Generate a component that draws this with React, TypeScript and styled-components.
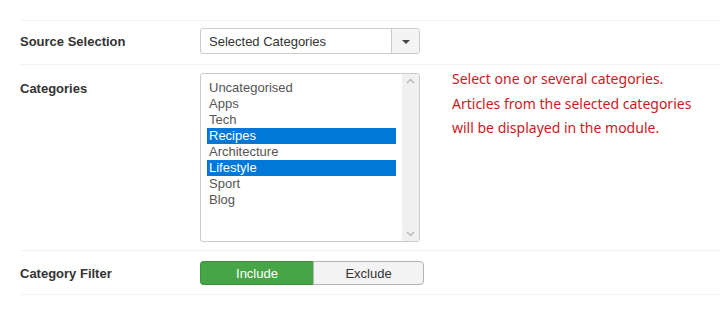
import React from "react";
import styled, { createGlobalStyle } from "styled-components";

const GlobalStyle = createGlobalStyle`
  html, body {
    margin: 0;
    padding: 0;
    background: #fff;
  }
  body {
    font-family: "Liberation Sans", Arial, sans-serif;
    font-size: 13px;
    color: #333;
  }
`;

const Form = styled.div`
  padding: 20px 0 0 20px;
`;

const Row = styled.div<{ $top: number; $bottom: number; $align?: string }>`
  display: flex;
  align-items: ${({ $align }) => $align || "center"};
  padding: ${({ $top, $bottom }) => `${$top}px 0 ${$bottom}px`};
  border-top: 1px solid #f3f3f3;
  &:last-child {
    border-bottom: 1px solid #f3f3f3;
  }
`;

const Label = styled.div<{ $offset?: number }>`
  flex: 0 0 180px;
  font-weight: 700;
  font-size: 13px;
  color: #333;
  margin-top: ${({ $offset }) => $offset || 0}px;
`;

const Select = styled.div`
  display: flex;
  width: 218px;
  height: 24px;
  border: 1px solid #ccc;
  border-radius: 3px;
  background: #fff;
`;

const SelectValue = styled.div`
  flex: 1;
  display: flex;
  align-items: center;
  padding-left: 8px;
  color: #333;
`;

const SelectArrow = styled.div`
  flex: 0 0 27px;
  display: flex;
  align-items: center;
  justify-content: center;
  border-left: 1px solid #ccc;
  background: #f4f4f4;
  border-radius: 0 3px 3px 0;
  &::after {
    content: "";
    border-left: 4px solid transparent;
    border-right: 4px solid transparent;
    border-top: 4px solid #444;
    margin-top: 1px;
  }
`;

const ListBox = styled.div`
  display: flex;
  width: 218px;
  height: 167px;
  border: 1px solid #ccc;
  border-radius: 3px;
  background: #fff;
`;

const Options = styled.div`
  flex: 1;
  padding: 6px;
`;

const Option = styled.div<{ $selected?: boolean }>`
  height: 16px;
  line-height: 16px;
  padding-left: 2px;
  color: ${({ $selected }) => ($selected ? "#fff" : "#555")};
  background: ${({ $selected }) => ($selected ? "#0078d7" : "transparent")};
`;

const Scrollbar = styled.div`
  flex: 0 0 17px;
  display: flex;
  flex-direction: column;
  justify-content: space-between;
  align-items: center;
  background: #f0f0f0;
  padding: 4px 0;
  border-radius: 0 3px 3px 0;
`;

const Help = styled.div`
  margin-left: 32px;
  margin-top: -6px;
  font-family: "Noto Sans", "Open Sans", sans-serif;
  font-size: 14px;
  line-height: 24.5px;
  color: #cc1a1f;
`;

const Toggle = styled.div`
  display: flex;
`;

const ToggleButton = styled.div<{ $active?: boolean; $width: number }>`
  width: ${({ $width }) => $width}px;
  height: 22px;
  display: flex;
  align-items: center;
  justify-content: center;
  font-size: 13px;
  border: 1px solid ${({ $active }) => ($active ? "#3a923a" : "#b3b3b3")};
  background: ${({ $active }) => ($active ? "#46a546" : "#f3f3f3")};
  color: ${({ $active }) => ($active ? "#fff" : "#333")};
  &:first-child {
    border-radius: 4px 0 0 4px;
    border-right: none;
  }
  &:last-child {
    border-radius: 0 4px 4px 0;
  }
`;

const Chevron = ({ up }: { up?: boolean }) => (
  <svg width="9" height="6" viewBox="0 0 9 6">
    <path
      d={up ? "M1 5 L4.5 1.5 L8 5" : "M1 1 L4.5 4.5 L8 1"}
      fill="none"
      stroke="#b5b5b5"
      strokeWidth="1.3"
    />
  </svg>
);

const categories = [
  { name: "Uncategorised" },
  { name: "Apps" },
  { name: "Tech" },
  { name: "Recipes", selected: true },
  { name: "Architecture" },
  { name: "Lifestyle", selected: true },
  { name: "Sport" },
  { name: "Blog" },
];

const App = () => {
  return (
    <>
      <GlobalStyle />
      <Form>
        <Row $top={7} $bottom={10}>
          <Label>Source Selection</Label>
          <Select>
            <SelectValue>Selected Categories</SelectValue>
            <SelectArrow />
          </Select>
        </Row>
        <Row $top={8} $bottom={8} $align="flex-start">
          <Label $offset={8}>Categories</Label>
          <ListBox>
            <Options>
              {categories.map((c) => (
                <Option key={c.name} $selected={c.selected}>
                  {c.name}
                </Option>
              ))}
            </Options>
            <Scrollbar>
              <Chevron up />
              <Chevron />
            </Scrollbar>
          </ListBox>
          <Help>
            Select one or several categories.
            <br />
            Articles from the selected categories
            <br />
            will be displayed in the module.
          </Help>
        </Row>
        <Row $top={10} $bottom={9}>
          <Label>Category Filter</Label>
          <Toggle>
            <ToggleButton $active $width={112}>
              Include
            </ToggleButton>
            <ToggleButton $width={109}>Exclude</ToggleButton>
          </Toggle>
        </Row>
      </Form>
    </>
  );
};

export default App;
